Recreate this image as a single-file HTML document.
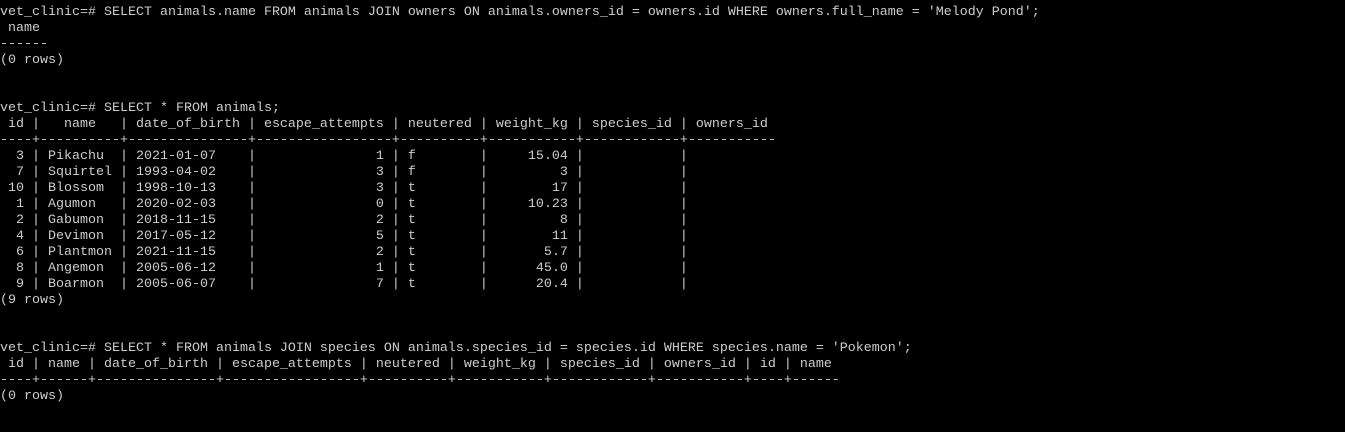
<html><head><style>
body{margin:0;background:#000;width:1345px;height:432px;overflow:hidden}
pre{margin:0;padding-top:5px;font-family:"Liberation Mono",monospace;font-size:13.33px;line-height:16px;color:#cccccc}
</style></head><body><pre>vet_clinic=# SELECT animals.name FROM animals JOIN owners ON animals.owners_id = owners.id WHERE owners.full_name = 'Melody Pond';
 name
------
(0 rows)


vet_clinic=# SELECT * FROM animals;
 id |   name   | date_of_birth | escape_attempts | neutered | weight_kg | species_id | owners_id
----+----------+---------------+-----------------+----------+-----------+------------+-----------
  3 | Pikachu  | 2021-01-07    |               1 | f        |     15.04 |            |
  7 | Squirtel | 1993-04-02    |               3 | f        |         3 |            |
 10 | Blossom  | 1998-10-13    |               3 | t        |        17 |            |
  1 | Agumon   | 2020-02-03    |               0 | t        |     10.23 |            |
  2 | Gabumon  | 2018-11-15    |               2 | t        |         8 |            |
  4 | Devimon  | 2017-05-12    |               5 | t        |        11 |            |
  6 | Plantmon | 2021-11-15    |               2 | t        |       5.7 |            |
  8 | Angemon  | 2005-06-12    |               1 | t        |      45.0 |            |
  9 | Boarmon  | 2005-06-07    |               7 | t        |      20.4 |            |
(9 rows)


vet_clinic=# SELECT * FROM animals JOIN species ON animals.species_id = species.id WHERE species.name = 'Pokemon';
 id | name | date_of_birth | escape_attempts | neutered | weight_kg | species_id | owners_id | id | name
----+------+---------------+-----------------+----------+-----------+------------+-----------+----+------
(0 rows)
</pre></body></html>
